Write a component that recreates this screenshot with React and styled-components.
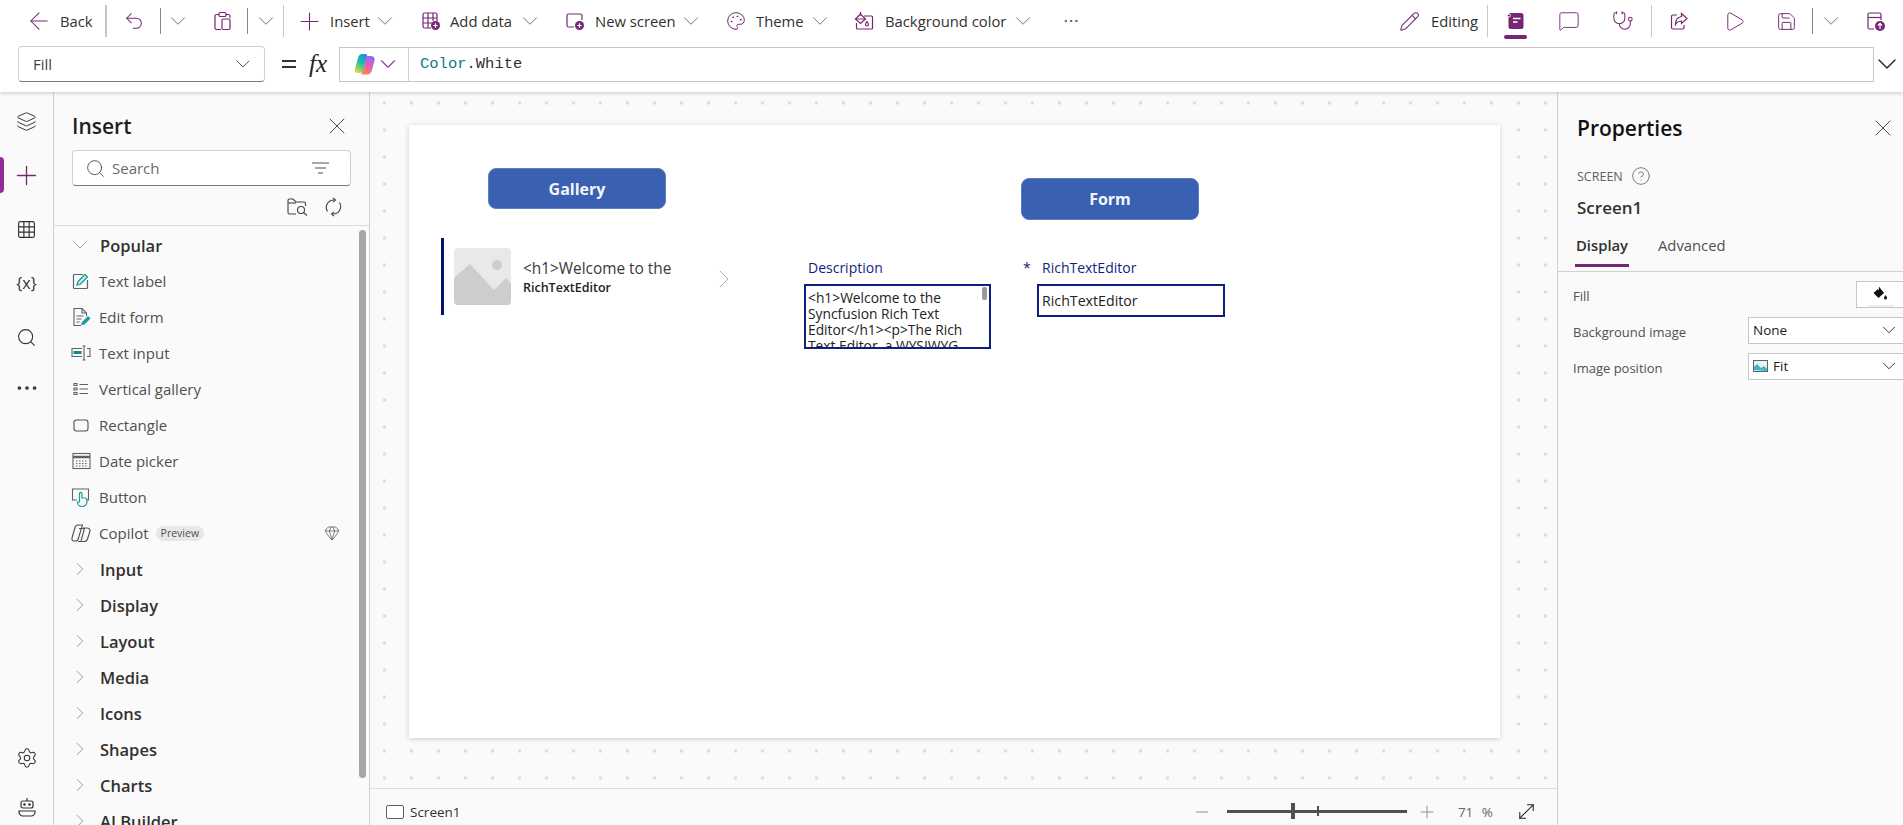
import React from 'react';
import styled, { createGlobalStyle } from 'styled-components';
import {
  ArrowLeft, Undo2, Plus, ChevronDown, ChevronRight, Palette, Pencil, MessageSquare,
  Stethoscope, Play, Save, Layers, Grid3x3, Search, Ellipsis, Settings, X, Gem,
  CircleHelp, MoveDiagonal, Minus,
} from 'lucide-react';

const PURPLE = '#742774';
const NAVY = '#0f1f80';
const TEAL = '#1d9a9a';

const GlobalStyle = createGlobalStyle`
  html, body { margin: 0; padding: 0; height: 100%; overflow: hidden; }
  body { font-family: "Open Sans", "Noto Sans", sans-serif; color: #323130; background: #fafafa; }
  * { box-sizing: border-box; }
`;

const Page = styled.div`
  display: flex;
  flex-direction: column;
  height: 825px;
  overflow: hidden;
`;

const Header = styled.header`
  height: 92px;
  background: #fff;
  box-shadow: 0 2px 3px rgba(0, 0, 0, 0.14);
  position: relative;
  z-index: 2;
  flex: none;
`;

const Toolbar = styled.div`
  display: flex;
  align-items: center;
  height: 42px;
  padding-left: 29px;
  font-size: 14.8px;
  color: #323130;
`;

// icon slot: the svg can be larger than the slot, lucide glyphs carry a lot of padding
const IconBox = styled.span`
  display: inline-flex;
  align-items: center;
  justify-content: center;
  flex: none;
  width: ${p => p.$w}px;
  & > svg { flex: none; }
`;

const Tool = styled.span`
  display: inline-flex;
  align-items: center;
  justify-content: center;
  flex: none;
  width: ${p => p.$w ? `${p.$w}px` : 'auto'};
  margin-left: ${p => p.$ml || 0}px;
  color: ${p => p.$color || PURPLE};
  & > svg { flex: none; }
`;

const ToolLabel = styled.span`
  width: ${p => p.$w}px;
  flex: none;
  margin-left: ${p => p.$ml || 0}px;
  white-space: nowrap;
  color: #323130;
`;

const Sep = styled.span`
  flex: none;
  width: ${p => p.$thick ? 2 : 1}px;
  height: ${p => p.$h || 32}px;
  margin-left: ${p => p.$ml || 0}px;
  background: ${p => p.$dark ? '#8a8886' : '#c8c6c4'};
`;

const ActiveTool = styled(Tool)`
  position: relative;
  &::after {
    content: '';
    position: absolute;
    left: -3px;
    right: -2px;
    top: 24px;
    height: 4px;
    border-radius: 2px;
    background: ${PURPLE};
  }
`;

const FormulaRow = styled.div`
  display: flex;
  align-items: center;
  height: 36px;
  margin-top: 4px;
  padding-left: 18px;
`;

const PropertySelect = styled.div`
  display: flex;
  align-items: center;
  justify-content: space-between;
  width: 247px;
  height: 36px;
  padding: 0 12px 0 14px;
  background: #fff;
  border: 1px solid #d1d1d1;
  border-bottom: 1px solid #7a7a7a;
  border-radius: 4px;
  font-size: 15px;
  color: #424242;
  flex: none;
`;

const Equals = styled.span`
  margin-left: 17px;
  width: 14px;
  height: 8px;
  border-top: 2px solid #323130;
  border-bottom: 2px solid #323130;
  flex: none;
`;

const Fx = styled.span`
  margin-left: 13px;
  width: 28px;
  font: italic 25px "Liberation Serif", serif;
  line-height: 30px;
  color: #222;
  flex: none;
`;

const FormulaBox = styled.div`
  display: flex;
  align-items: stretch;
  width: 1535px;
  height: 35px;
  margin-left: 2px;
  border: 1px solid #c8c6c4;
  flex: none;
`;

const CopilotCell = styled.div`
  display: flex;
  align-items: center;
  gap: 5px;
  width: 69px;
  padding-left: 14px;
  border-right: 1px solid #d1d1d1;
  color: #8f3f95;
`;

const Code = styled.div`
  display: flex;
  align-items: center;
  padding-left: 11px;
  font: 15.5px "Liberation Mono", monospace;
  color: #323130;
`;

const CodeKeyword = styled.span`
  color: #0a7d84;
`;

const ExpandFormula = styled(IconBox)`
  margin-left: 5px;
  color: #222;
`;

const Main = styled.div`
  display: flex;
  flex: 1;
  min-height: 0;
`;

const Rail = styled.nav`
  display: flex;
  flex-direction: column;
  flex: none;
  width: 54px;
  padding-top: 2px;
  background: #fafafa;
  border-right: 1px solid #d1d1d1;
`;

const RailButton = styled.div`
  position: relative;
  display: flex;
  align-items: center;
  justify-content: center;
  height: ${p => p.$h || 54}px;
  color: ${p => p.$active ? PURPLE : '#323130'};
  ${p => p.$active && `
    &::before {
      content: '';
      position: absolute;
      left: 0;
      top: 9px;
      width: 4px;
      height: 36px;
      border-radius: 0 4px 4px 0;
      background: #8f2f95;
    }
  `}
`;

const RailBraces = styled.span`
  font-size: 16px;
  color: #323130;
`;

const RailBottom = styled.div`
  display: flex;
  flex-direction: column;
  gap: 13px;
  margin-top: auto;
  color: #323130;
`;

const RailBottomButton = styled.div`
  display: flex;
  align-items: center;
  justify-content: center;
  height: 36px;
`;

const InsertPanel = styled.aside`
  display: flex;
  flex-direction: column;
  flex: none;
  width: 316px;
  background: #fafafa;
  border-right: 1px solid #d1d1d1;
`;

const InsertHeader = styled.div`
  flex: none;
  height: 134px;
  padding: 17px 18px 0;
  border-bottom: 1px solid #dcdcdc;
`;

const TitleRow = styled.div`
  display: flex;
  align-items: center;
  justify-content: space-between;
  height: 34px;
  color: #242424;
  & > svg { flex: none; }
`;

const PanelTitle = styled.h2`
  margin: 0;
  font-size: 21px;
  font-weight: 600;
  color: #1f1f1f;
`;

const SearchBox = styled.div`
  display: flex;
  align-items: center;
  width: 279px;
  height: 36px;
  margin-top: 7px;
  padding: 0 21px 0 12px;
  background: #fff;
  border: 1px solid #d1d1d1;
  border-bottom: 1px solid #7a7a7a;
  border-radius: 4px;
  color: #424242;
`;

const SearchText = styled.span`
  flex: 1;
  margin-left: 6px;
  font-size: 15px;
  color: #6a6a6a;
`;

const PanelActions = styled.div`
  display: flex;
  justify-content: flex-end;
  align-items: center;
  gap: 16px;
  height: 24px;
  margin-top: 9px;
  padding-right: 8px;
  color: #424242;
`;

const InsertList = styled.div`
  position: relative;
  flex: 1;
  min-height: 0;
  overflow: hidden;
  padding-top: 1px;
`;

const ScrollThumb = styled.div`
  position: absolute;
  left: 305px;
  top: 4px;
  width: 7px;
  height: 548px;
  border-radius: 4px;
  background: #a6a6a6;
`;

const CategoryRow = styled.div`
  display: flex;
  align-items: center;
  height: 36px;
  padding-left: 19px;
  font-size: 16.5px;
  font-weight: 600;
  color: #323130;
`;

const CategoryChevron = styled(IconBox)`
  width: 14px;
  margin-right: 13px;
  color: #8a8886;
`;

const ItemRow = styled.div`
  display: flex;
  align-items: center;
  height: 36px;
  padding-left: 18px;
  font-size: 15px;
  color: #505050;
`;

const ItemIcon = styled.span`
  display: inline-flex;
  justify-content: center;
  width: 18px;
  margin-right: 9px;
  & > svg { flex: none; }
`;

const PreviewTag = styled.span`
  margin-left: 7px;
  padding: 1px 5px;
  border-radius: 8px;
  background: #e8e8e8;
  font-size: 10.5px;
  line-height: 13px;
  color: #505050;
`;

const PremiumIcon = styled.span`
  display: inline-flex;
  margin-left: 120px;
  color: #424242;
`;

const CanvasArea = styled.section`
  display: flex;
  flex-direction: column;
  flex: 1;
  min-width: 0;
`;

const Canvas = styled.div`
  flex: 1;
  min-height: 0;
  padding: 33px 57px 0 39px;
  background-color: #fafafa;
  background-image: radial-gradient(circle, #dcdcdc 1.4px, transparent 1.7px);
  background-size: 27px 27px;
  background-position: 1px -2.5px;
`;

const Screen = styled.div`
  position: relative;
  height: 613px;
  background: #fff;
  box-shadow: 0 1px 5px rgba(0, 0, 0, 0.18);
`;

/* the controls sit at free coordinates on the app screen, same as in the studio */
const CanvasButton = styled.div`
  position: absolute;
  left: ${p => p.$x}px;
  top: ${p => p.$y}px;
  display: flex;
  align-items: center;
  justify-content: center;
  width: 178px;
  height: ${p => p.$h}px;
  border-radius: 8px;
  background: #3a60b2;
  border: 1px solid #5a7cc0;
  font-size: 16px;
  font-weight: 700;
  color: #f4f6fb;
`;

const GalleryItem = styled.div`
  position: absolute;
  left: 32px;
  top: 113px;
  display: flex;
  align-items: center;
  width: 295px;
  height: 77px;
  padding-left: 10px;
  border-left: 3px solid #06136e;
`;

const GalleryText = styled.div`
  margin: 2px 0 0 12px;
  width: 200px;
  overflow: hidden;
`;

const GalleryTitle = styled.div`
  font-size: 15.4px;
  line-height: 20px;
  white-space: nowrap;
  color: #3a3a3a;
`;

const GallerySubtitle = styled.div`
  font-size: 12.5px;
  font-weight: 600;
  line-height: 17px;
  color: #222;
`;

const GalleryChevron = styled(IconBox)`
  width: 22px;
  margin: 5px 0 0 -10px;
  color: #a8a8a8;
`;

const FieldLabel = styled.div`
  position: absolute;
  left: ${p => p.$x}px;
  top: 134px;
  font-size: 14px;
  line-height: 18px;
  color: ${NAVY};
`;

const DescriptionBox = styled.div`
  position: absolute;
  left: 395px;
  top: 159px;
  width: 187px;
  height: 65px;
  padding: 4px 10px 0 2px;
  overflow: hidden;
  border: 2px solid ${NAVY};
  font-size: 13.8px;
  line-height: 16px;
  color: #222;
`;

const DescriptionThumb = styled.span`
  position: absolute;
  top: 1px;
  right: 2px;
  width: 5px;
  height: 13px;
  border-radius: 2px;
  background: #9a9a9a;
`;

const TextInputBox = styled.div`
  position: absolute;
  left: 628px;
  top: 159px;
  display: flex;
  align-items: center;
  width: 188px;
  height: 33px;
  padding-left: 3px;
  border: 2px solid ${NAVY};
  font-size: 14.2px;
  color: #222;
`;

const StatusBar = styled.div`
  display: flex;
  align-items: center;
  flex: none;
  height: 37px;
  padding: 9px 0 0 16px;
  background: #fafafa;
  border-top: 1px solid #dedede;
  font-size: 13.5px;
  color: #323130;
`;

const ScreenGlyph = styled.span`
  width: 18px;
  height: 14px;
  margin-right: 6px;
  background: #fff;
  border: 1px solid #616161;
  border-radius: 2px;
`;

const ZoomControls = styled.div`
  display: flex;
  align-items: center;
  margin-left: auto;
  padding-right: 21px;
  color: #8a8886;
`;

const SliderTrack = styled.div`
  position: relative;
  width: 180px;
  height: 3px;
  margin: 0 10px 0 15px;
  background: #505050;
`;

const SliderThumb = styled.span`
  position: absolute;
  left: 64px;
  top: -7px;
  width: 4px;
  height: 16px;
  background: #505050;
`;

const SliderTick = styled.span`
  position: absolute;
  left: 90px;
  top: -4px;
  width: 2px;
  height: 10px;
  background: #505050;
`;

const ZoomValue = styled.span`
  margin: 0 24px 0 21px;
  font-size: 13.5px;
  word-spacing: 5px;
  color: #666;
`;

const ExpandIcon = styled(IconBox)`
  width: 19px;
  color: #222;
`;

const PropertiesPanel = styled.aside`
  flex: none;
  width: 346px;
  overflow: hidden;
  background: #fafafa;
  border-left: 1px solid #d1d1d1;
`;

const PropsHeader = styled.div`
  padding: 19px 6px 0 19px;
`;

const PropsTitle = styled(PanelTitle)`
  color: #111;
`;

const SectionTag = styled.div`
  display: flex;
  align-items: center;
  gap: 8px;
  margin-top: 21px;
  height: 20px;
  font-size: 12.5px;
  color: #616161;
`;

const ScreenName = styled.div`
  margin-top: 10px;
  font-size: 17px;
  font-weight: 600;
  line-height: 23px;
  color: #323130;
`;

const Tabs = styled.div`
  display: flex;
  gap: 28px;
  height: 41px;
  margin-top: 12px;
  padding-left: 17px;
  border-bottom: 1px solid #d1d1d1;
`;

const Tab = styled.div`
  height: 36px;
  padding: 4px 1px 0;
  font-size: 14.8px;
  font-weight: ${p => p.$active ? 600 : 400};
  color: ${p => p.$active ? '#323130' : '#505050'};
  border-bottom: ${p => p.$active ? `3px solid ${PURPLE}` : 'none'};
`;

const PropRow = styled.div`
  display: flex;
  align-items: center;
  justify-content: space-between;
  height: 36px;
  padding-left: 15px;
  font-size: 13px;
  color: #505050;
`;

const FirstPropRow = styled(PropRow)`
  margin-top: 6px;
`;

const FillSwatch = styled.div`
  position: relative;
  display: flex;
  justify-content: center;
  padding-top: 3px;
  width: 47px;
  height: 27px;
  margin-bottom: 4px;
  background: #fff;
  border: 1px solid #c8c6c4;
  border-right: none;
  color: #111;
  &::after {
    content: '';
    position: absolute;
    left: 11px;
    right: 9px;
    bottom: 0;
    height: 2px;
    background: #eeeeee;
  }
`;

const PropSelect = styled.div`
  display: flex;
  align-items: center;
  flex: none;
  width: 155px;
  height: 27px;
  margin-bottom: 4px;
  padding: 0 3px 0 4px;
  background: #fff;
  border: 1px solid #c8c6c4;
  border-right: none;
  font-size: 13.5px;
  color: #222;
`;

const SelectText = styled.span`
  flex: 1;
  margin-left: ${p => p.$ml || 0}px;
`;

const Thin = ({ as: Icon, size = 20, sw = 1.2, ...rest }) => <Icon size={size} strokeWidth={sw} {...rest} />;

const Chevron = ({ size = 26 }) => (
  <IconBox $w={17}><ChevronDown size={size} strokeWidth={0.8} color="#605e5c" /></IconBox>
);

const PasteIcon = () => (
  <svg width="19" height="20" viewBox="0 0 19 20" fill="none" stroke={PURPLE} strokeWidth="1.2">
    <path d="M6 3.5H3.5A1.5 1.5 0 0 0 2 5v12a1.5 1.5 0 0 0 1.5 1.5H8" />
    <path d="M13 3.5h2.5A1.5 1.5 0 0 1 17 5v2" />
    <rect x="6" y="1.5" width="7" height="4" rx="1.2" />
    <rect x="9" y="8" width="8" height="10.5" rx="1.2" />
  </svg>
);

const TableAddIcon = () => (
  <svg width="20" height="20" viewBox="0 0 20 20" fill="none" stroke={PURPLE} strokeWidth="1.2">
    <path d="M10 17H3.5A1.5 1.5 0 0 1 2 15.5v-12A1.5 1.5 0 0 1 3.5 2h11A1.5 1.5 0 0 1 16 3.5V10" />
    <path d="M2 7h14M2 12h9M7 2v15M12 2v8" />
    <circle cx="14.5" cy="14.5" r="4.5" fill={PURPLE} stroke="none" />
    <path d="M14.5 12.3v4.4M12.3 14.5h4.4" stroke="#fff" />
  </svg>
);

const ScreenAddIcon = () => (
  <svg width="20" height="20" viewBox="0 0 20 20" fill="none" stroke={PURPLE} strokeWidth="1.2">
    <path d="M9 16H3.5A1.5 1.5 0 0 1 2 14.5v-10A1.5 1.5 0 0 1 3.5 3h12A1.5 1.5 0 0 1 17 4.5V9" />
    <circle cx="14.5" cy="14.5" r="4.5" fill={PURPLE} stroke="none" />
    <path d="M14.5 12.3v4.4M12.3 14.5h4.4" stroke="#fff" />
  </svg>
);

const BackgroundIcon = () => (
  <svg width="20" height="20" viewBox="0 0 20 20" fill="none" stroke={PURPLE} strokeWidth="1.2">
    <path d="M10 5h7.5a1 1 0 0 1 1 1v11a1 1 0 0 1-1 1h-14a1 1 0 0 1-1-1v-5" />
    <path d="M6.5 3 1.5 8l5 4.5L11.5 8z" />
    <path d="M6.5 1v3.5M1.5 8h10" />
    <path d="M13 10.5c-1 1.5-1.5 2.3-1.5 3a1.5 1.5 0 0 0 3 0c0-.7-.5-1.5-1.5-3z" />
  </svg>
);

const NotesIcon = () => (
  <svg width="18" height="20" viewBox="0 0 18 20">
    <rect x="1.5" y="2" width="15" height="16" rx="2.5" fill={PURPLE} />
    <rect x="0.5" y="3" width="3" height="3" rx="1.5" fill={PURPLE} stroke="#fff" strokeWidth="0.8" />
    <path d="M6 7.5h7.5M6 11h4.5" stroke="#fff" strokeWidth="1.4" />
  </svg>
);

const ShareIcon = () => (
  <svg width="18" height="20" viewBox="0 0 18 20" fill="none" stroke={PURPLE} strokeWidth="1.2">
    <path d="M7 4H3a1.5 1.5 0 0 0-1.5 1.5v11A1.5 1.5 0 0 0 3 18h9.5a1.5 1.5 0 0 0 1.5-1.5V14" />
    <path d="M11.5 2.5 17 7.5l-5.5 5V10c-3 0-4.5 1-6 3.5 0-5 2.5-7.5 6-8z" />
  </svg>
);

const PublishIcon = () => (
  <svg width="20" height="20" viewBox="0 0 20 20" fill="none" stroke={PURPLE} strokeWidth="1.2">
    <path d="M8 18H3.5A1.5 1.5 0 0 1 2 16.5v-13A1.5 1.5 0 0 1 3.5 2h10A1.5 1.5 0 0 1 15 3.5V9" />
    <path d="M2 6.5h13" />
    <circle cx="14" cy="15" r="5" fill={PURPLE} stroke="none" />
    <path d="M14 18v-5.5M11.8 14.5 14 12.3l2.2 2.2" stroke="#fff" />
  </svg>
);

const CopilotLogo = () => (
  <svg width="21" height="22" viewBox="0 0 21 22">
    <defs>
      <linearGradient id="cpA" x1="0.7" y1="0" x2="0.3" y2="1">
        <stop offset="0" stopColor="#1c8fe6" />
        <stop offset="0.5" stopColor="#23c2a0" />
        <stop offset="1" stopColor="#d8dc3e" />
      </linearGradient>
      <linearGradient id="cpB" x1="0.7" y1="0" x2="0.3" y2="1">
        <stop offset="0" stopColor="#8a6cf2" />
        <stop offset="0.5" stopColor="#e35bbd" />
        <stop offset="1" stopColor="#f6894a" />
      </linearGradient>
    </defs>
    <path d="M8 1h3.5c1.5 0 2 1 1.5 2.5L9.5 16c-.8 2.7-2.3 4-4.5 4H3.5C1.3 20 .2 18.5.8 16.3L4 5c.7-2.600 2-4 4-4z" fill="url(#cpA)" />
    <path d="M13 3h3.5c3 0 4.800 1.5 4 4.5L18 17c-.8 3-2.5 4.500-5 4.500H9c-1.400 0-2-1-1.400-2.300 2-3 3.500-7 4-12.700.1-2 .4-3.500 1.400-3.500z" fill="url(#cpB)" />
  </svg>
);

const BucketIcon = () => (
  <svg width="16" height="16" viewBox="0 0 16 16" fill="#111">
    <path d="M6.5 1v2.5L1.5 8l5 5 5.500-5z" />
    <path d="M6.5 1v4" stroke="#fff" strokeWidth="0.8" />
    <path d="M13.5 10c-1 1.5-1.5 2.3-1.5 3a1.5 1.5 0 0 0 3 0c0-.7-.5-1.500-1.500-3z" />
  </svg>
);

const TextLabelIcon = () => (
  <svg width="18" height="18" viewBox="0 0 18 18" fill="none">
    <path d="M11 2.5H2.5a1 1 0 0 0-1 1v12a1 1 0 0 0 1 1h12a1 1 0 0 0 1-1V8" stroke="#616161" strokeWidth="1.2" />
    <path d="M5 13l1-3.5 7-7 2.5 2.5-7 7z" stroke={TEAL} strokeWidth="1.3" fill="#c7eeee" />
  </svg>
);

const EditFormIcon = () => (
  <svg width="19" height="20" viewBox="0 0 19 20" fill="none">
    <path d="M9 18.5H2V1.5h8l4.5 4.5v3M10 1.5V6h4.500M4.500 9h7M4.500 12h5M4.500 15h3" stroke="#616161" strokeWidth="1.1" />
    <path d="M9 18l1-3 6-6 2.5 2.5-6 6z" fill={TEAL} />
  </svg>
);

const TextInputIcon = () => (
  <svg width="20" height="16" viewBox="0 0 20 16" fill="none">
    <path d="M11 3.5H1v8h10M16 3.5h3v8h-3" stroke="#616161" strokeWidth="1.1" />
    <path d="M11.5 1h3M13 1v14M11.5 15h3" stroke="#616161" strokeWidth="1.1" />
    <rect x="2.5" y="6" width="8" height="3" fill="#0d8a8a" />
  </svg>
);

const GalleryListIcon = () => (
  <svg width="16" height="14" viewBox="0 0 16 14" fill="none" stroke="#616161" strokeWidth="1.1">
    <path d="M1 1.5h3v2H1zM1 6h3v2H1zM1 10.5h3v2H1zM6.5 2.5H15M6.5 7H15M6.5 11.5H15" />
  </svg>
);

const RectangleIcon = () => (
  <svg width="16" height="13" viewBox="0 0 16 13" fill="none" stroke="#505050" strokeWidth="1.1">
    <rect x="1" y="1" width="14" height="11" rx="2.5" />
  </svg>
);

const DateIcon = () => (
  <svg width="19" height="18" viewBox="0 0 19 18" fill="none" stroke="#616161" strokeWidth="1.1">
    <rect x="1" y="1.5" width="17" height="15" />
    <path d="M1 5h17" strokeWidth="2.5" />
    <path d="M4 9h11M4 11.5h11M4 14h11" strokeDasharray="1.5 1.5" />
  </svg>
);

const ButtonIcon = () => (
  <svg width="20" height="20" viewBox="0 0 20 20" fill="none">
    <path d="M6 13H1.5V2h16v11h-3" stroke="#616161" strokeWidth="1.1" />
    <path d="M8.5 15V6.5a1.2 1.2 0 0 1 2.4 0V11h3a2 2 0 0 1 2 2v2a4.5 4.5 0 0 1-4.5 4.5h-.5A4.5 4.5 0 0 1 6.5 15z" stroke={TEAL} strokeWidth="1.2" fill="#fafafa" />
  </svg>
);

const CopilotOutlineIcon = () => (
  <svg width="20" height="18" viewBox="0 0 20 18" fill="none" stroke="#505050" strokeWidth="1.1">
    <path d="M7 1h4.5L7.5 14c-.5 1.8-1.5 3-3 3H3C1.5 17 .6 15.7 1 14L4 3.5C4.4 2 5.5 1 7 1z" />
    <path d="M12 4h4c2 0 3.3 1.3 3 3l-2.5 8c-.5 1.5-1.5 2.5-3 2.5H7" />
    <path d="M8 4.5h5.5L10 17" />
  </svg>
);

const PlaceholderImage = () => (
  <svg width="57" height="57" viewBox="0 0 57 57">
    <rect width="57" height="57" rx="4" fill="#e9e9e9" />
    <circle cx="43" cy="17" r="5" fill="#cdcdcc" />
    <path d="M0 30 16 16l24 26 12-12 5 5v18a4 4 0 0 1-4 4H4a4 4 0 0 1-4-4z" fill="#cdcdcc" />
  </svg>
);

const FitIcon = () => (
  <svg width="15" height="12" viewBox="0 0 15 12">
    <rect x="0.5" y="0.5" width="14" height="11" fill="#e6f3f5" stroke="#616161" />
    <path d="M1 10V7l3-3 4 4 3-2 3 3v2z" fill="#3fb6c0" />
  </svg>
);

const POPULAR = [
  ['Text label', TextLabelIcon],
  ['Edit form', EditFormIcon],
  ['Text input', TextInputIcon],
  ['Vertical gallery', GalleryListIcon],
  ['Rectangle', RectangleIcon],
  ['Date picker', DateIcon],
  ['Button', ButtonIcon],
];

const CATEGORIES = ['Input', 'Display', 'Layout', 'Media', 'Icons', 'Shapes', 'Charts', 'AI Builder'];

const App = () => (
  <Page>
    <GlobalStyle />
    <Header>
      <Toolbar>
        <Tool $w={20}><Thin as={ArrowLeft} size={28} sw={0.9} /></Tool>
        <ToolLabel $ml={11} $w={32}>Back</ToolLabel>
        <Sep $thick $ml={13} />
        <Tool $ml={17} $w={20}><Thin as={Undo2} size={22} sw={1.1} /></Tool>
        <Sep $dark $h={26} $ml={16} />
        <Tool $ml={8}><Chevron /></Tool>
        <Tool $ml={27}><PasteIcon /></Tool>
        <Sep $h={26} $dark $ml={15} />
        <Tool $ml={9}><Chevron /></Tool>
        <Sep $ml={9} />
        <Tool $ml={15} $w={20}><Thin as={Plus} size={29} sw={0.9} /></Tool>
        <ToolLabel $ml={11} $w={38}>Insert</ToolLabel>
        <Tool $ml={8}><Chevron /></Tool>
        <Tool $ml={28}><TableAddIcon /></Tool>
        <ToolLabel $ml={9} $w={62}>Add data</ToolLabel>
        <Tool $ml={9}><Chevron /></Tool>
        <Tool $ml={27}><ScreenAddIcon /></Tool>
        <ToolLabel $ml={10} $w={79}>New screen</ToolLabel>
        <Tool $ml={8}><Chevron /></Tool>
        <Tool $ml={27}><Thin as={Palette} /></Tool>
        <ToolLabel $ml={10} $w={46}>Theme</ToolLabel>
        <Tool $ml={9}><Chevron /></Tool>
        <Tool $ml={26}><BackgroundIcon /></Tool>
        <ToolLabel $ml={11} $w={121}>Background color</ToolLabel>
        <Tool $ml={8}><Chevron /></Tool>
        <Tool $ml={31}><Thin as={Ellipsis} size={18} /></Tool>
        <Tool $ml={320} $w={19}><Thin as={Pencil} size={21} /></Tool>
        <ToolLabel $ml={12} $w={47}>Editing</ToolLabel>
        <Sep $ml={9} />
        <ActiveTool $ml={19}><NotesIcon /></ActiveTool>
        <Tool $ml={34} $w={20}><Thin as={MessageSquare} size={22} sw={1} /></Tool>
        <Tool $ml={34} $w={20}><Thin as={Stethoscope} size={22} sw={1.1} /></Tool>
        <Sep $ml={18} />
        <Tool $ml={18}><ShareIcon /></Tool>
        <Tool $ml={37} $w={19}><Thin as={Play} size={23} sw={1} /></Tool>
        <Tool $ml={33} $w={19}><Thin as={Save} size={21} sw={1.1} /></Tool>
        <Sep $dark $h={26} $ml={16} />
        <Tool $ml={9}><Chevron /></Tool>
        <Tool $ml={27}><PublishIcon /></Tool>
      </Toolbar>
      <FormulaRow>
        <PropertySelect>
          Fill
          <IconBox $w={19}><ChevronDown size={24} strokeWidth={1} color="#605e5c" /></IconBox>
        </PropertySelect>
        <Equals />
        <Fx>fx</Fx>
        <FormulaBox>
          <CopilotCell>
            <CopilotLogo />
            <IconBox $w={16}><ChevronDown size={26} strokeWidth={1} /></IconBox>
          </CopilotCell>
          <Code><CodeKeyword>Color</CodeKeyword>.White</Code>
        </FormulaBox>
        <ExpandFormula $w={16}><ChevronDown size={32} strokeWidth={1} /></ExpandFormula>
      </FormulaRow>
    </Header>
    <Main>
      <Rail>
        <RailButton><Thin as={Layers} size={21} sw={1.1} /></RailButton>
        <RailButton $active><Thin as={Plus} size={31} sw={1} /></RailButton>
        <RailButton><Thin as={Grid3x3} size={21} sw={1.3} /></RailButton>
        <RailButton><RailBraces>{'{x}'}</RailBraces></RailButton>
        <RailButton><Thin as={Search} size={21} sw={1.2} /></RailButton>
        <RailButton $h={48}><Thin as={Ellipsis} size={26} sw={1.4} /></RailButton>
        <RailBottom>
          <RailBottomButton><Thin as={Settings} size={22} sw={1.1} /></RailBottomButton>
          <RailBottomButton>
            <svg width="18" height="20" viewBox="0 0 18 20" fill="none" stroke="#323130" strokeWidth="1.2">
              <path d="M9 1v3" />
              <rect x="3" y="4" width="12" height="7" rx="2" />
              <path d="M1 14h16v1a4 4 0 0 1-4 4H5a4 4 0 0 1-4-4z" />
              <circle cx="6.5" cy="7.5" r="0.7" fill="#323130" />
              <circle cx="11.5" cy="7.5" r="0.7" fill="#323130" />
            </svg>
          </RailBottomButton>
        </RailBottom>
      </Rail>
      <InsertPanel>
        <InsertHeader>
          <TitleRow>
            <PanelTitle>Insert</PanelTitle>
            <Thin as={X} size={28} sw={0.7} />
          </TitleRow>
          <SearchBox>
            <Thin as={Search} size={21} sw={1} />
            <SearchText>Search</SearchText>
            <svg width="17" height="12" viewBox="0 0 17 12" stroke="#505050" strokeWidth="1.1">
              <path d="M0 1h17M3 6h11M6 11h5" />
            </svg>
          </SearchBox>
          <PanelActions>
            <svg width="21" height="18" viewBox="0 0 21 18" fill="none" stroke="#424242" strokeWidth="1.1">
              <path d="M9 16H2.5A1.5 1.5 0 0 1 1 14.5v-12A1.5 1.5 0 0 1 2.5 1H6l3 3h8a1.5 1.5 0 0 1 1.5 1.5V8" />
              <path d="M1 5h8" />
              <circle cx="14" cy="12" r="3.5" />
              <path d="m16.5 14.5 3.5 3" />
            </svg>
            <svg width="19" height="20" viewBox="0 0 19 20" fill="none" stroke="#424242" strokeWidth="1.1">
              <path d="M3.5 14.5A7.5 7.5 0 0 1 10 3h1" />
              <path d="m9 .8 2.5 2.2L9 5.2" />
              <path d="M15.5 5.5A7.5 7.5 0 0 1 9 17H8" />
              <path d="m10 14.8-2.5 2.2 2.5 2.2" />
            </svg>
          </PanelActions>
        </InsertHeader>
        <InsertList>
          <ScrollThumb />
          <CategoryRow>
            <CategoryChevron><ChevronDown size={24} strokeWidth={0.8} /></CategoryChevron>
            Popular
          </CategoryRow>
          {POPULAR.map(([label, Icon]) => (
            <ItemRow key={label}>
              <ItemIcon><Icon /></ItemIcon>
              {label}
            </ItemRow>
          ))}
          <ItemRow>
            <ItemIcon><CopilotOutlineIcon /></ItemIcon>
            Copilot
            <PreviewTag>Preview</PreviewTag>
            <PremiumIcon><Thin as={Gem} size={16} sw={1} /></PremiumIcon>
          </ItemRow>
          {CATEGORIES.map(label => (
            <CategoryRow key={label}>
              <CategoryChevron><ChevronRight size={22} strokeWidth={0.9} /></CategoryChevron>
              {label}
            </CategoryRow>
          ))}
        </InsertList>
      </InsertPanel>
      <CanvasArea>
        <Canvas>
          <Screen>
            <CanvasButton $x={79} $y={43} $h={41}>Gallery</CanvasButton>
            <CanvasButton $x={612} $y={53} $h={42}>Form</CanvasButton>
            <GalleryItem>
              <PlaceholderImage />
              <GalleryText>
                <GalleryTitle>{'<h1>Welcome to the'}</GalleryTitle>
                <GallerySubtitle>RichTextEditor</GallerySubtitle>
              </GalleryText>
              <GalleryChevron><ChevronRight size={32} strokeWidth={0.7} /></GalleryChevron>
            </GalleryItem>
            <FieldLabel $x={399}>Description</FieldLabel>
            <DescriptionBox>
              <DescriptionThumb />
              {'<h1>Welcome to the Syncfusion Rich Text Editor</h1><p>The Rich Text Editor, a WYSIWYG'}
            </DescriptionBox>
            <FieldLabel $x={614}>*</FieldLabel>
            <FieldLabel $x={633}>RichTextEditor</FieldLabel>
            <TextInputBox>RichTextEditor</TextInputBox>
          </Screen>
        </Canvas>
        <StatusBar>
          <ScreenGlyph />
          Screen1
          <ZoomControls>
            <Minus size={20} strokeWidth={1.1} />
            <SliderTrack>
              <SliderThumb />
              <SliderTick />
            </SliderTrack>
            <Plus size={20} strokeWidth={1.1} />
            <ZoomValue>71 %</ZoomValue>
            <ExpandIcon><MoveDiagonal size={23} strokeWidth={1.1} /></ExpandIcon>
          </ZoomControls>
        </StatusBar>
      </CanvasArea>
      <PropertiesPanel>
        <PropsHeader>
          <TitleRow>
            <PropsTitle>Properties</PropsTitle>
            <Thin as={X} size={28} sw={0.7} />
          </TitleRow>
          <SectionTag>
            SCREEN
            <CircleHelp size={20} strokeWidth={0.9} color="#505050" />
          </SectionTag>
          <ScreenName>Screen1</ScreenName>
        </PropsHeader>
        <Tabs>
          <Tab $active>Display</Tab>
          <Tab>Advanced</Tab>
        </Tabs>
        <FirstPropRow>
          Fill
          <FillSwatch><BucketIcon /></FillSwatch>
        </FirstPropRow>
        <PropRow>
          Background image
          <PropSelect>
            <SelectText>None</SelectText>
            <ChevronDown size={22} strokeWidth={1} />
          </PropSelect>
        </PropRow>
        <PropRow>
          Image position
          <PropSelect>
            <FitIcon />
            <SelectText $ml={5}>Fit</SelectText>
            <ChevronDown size={22} strokeWidth={1} />
          </PropSelect>
        </PropRow>
      </PropertiesPanel>
    </Main>
  </Page>
);

export default App;
